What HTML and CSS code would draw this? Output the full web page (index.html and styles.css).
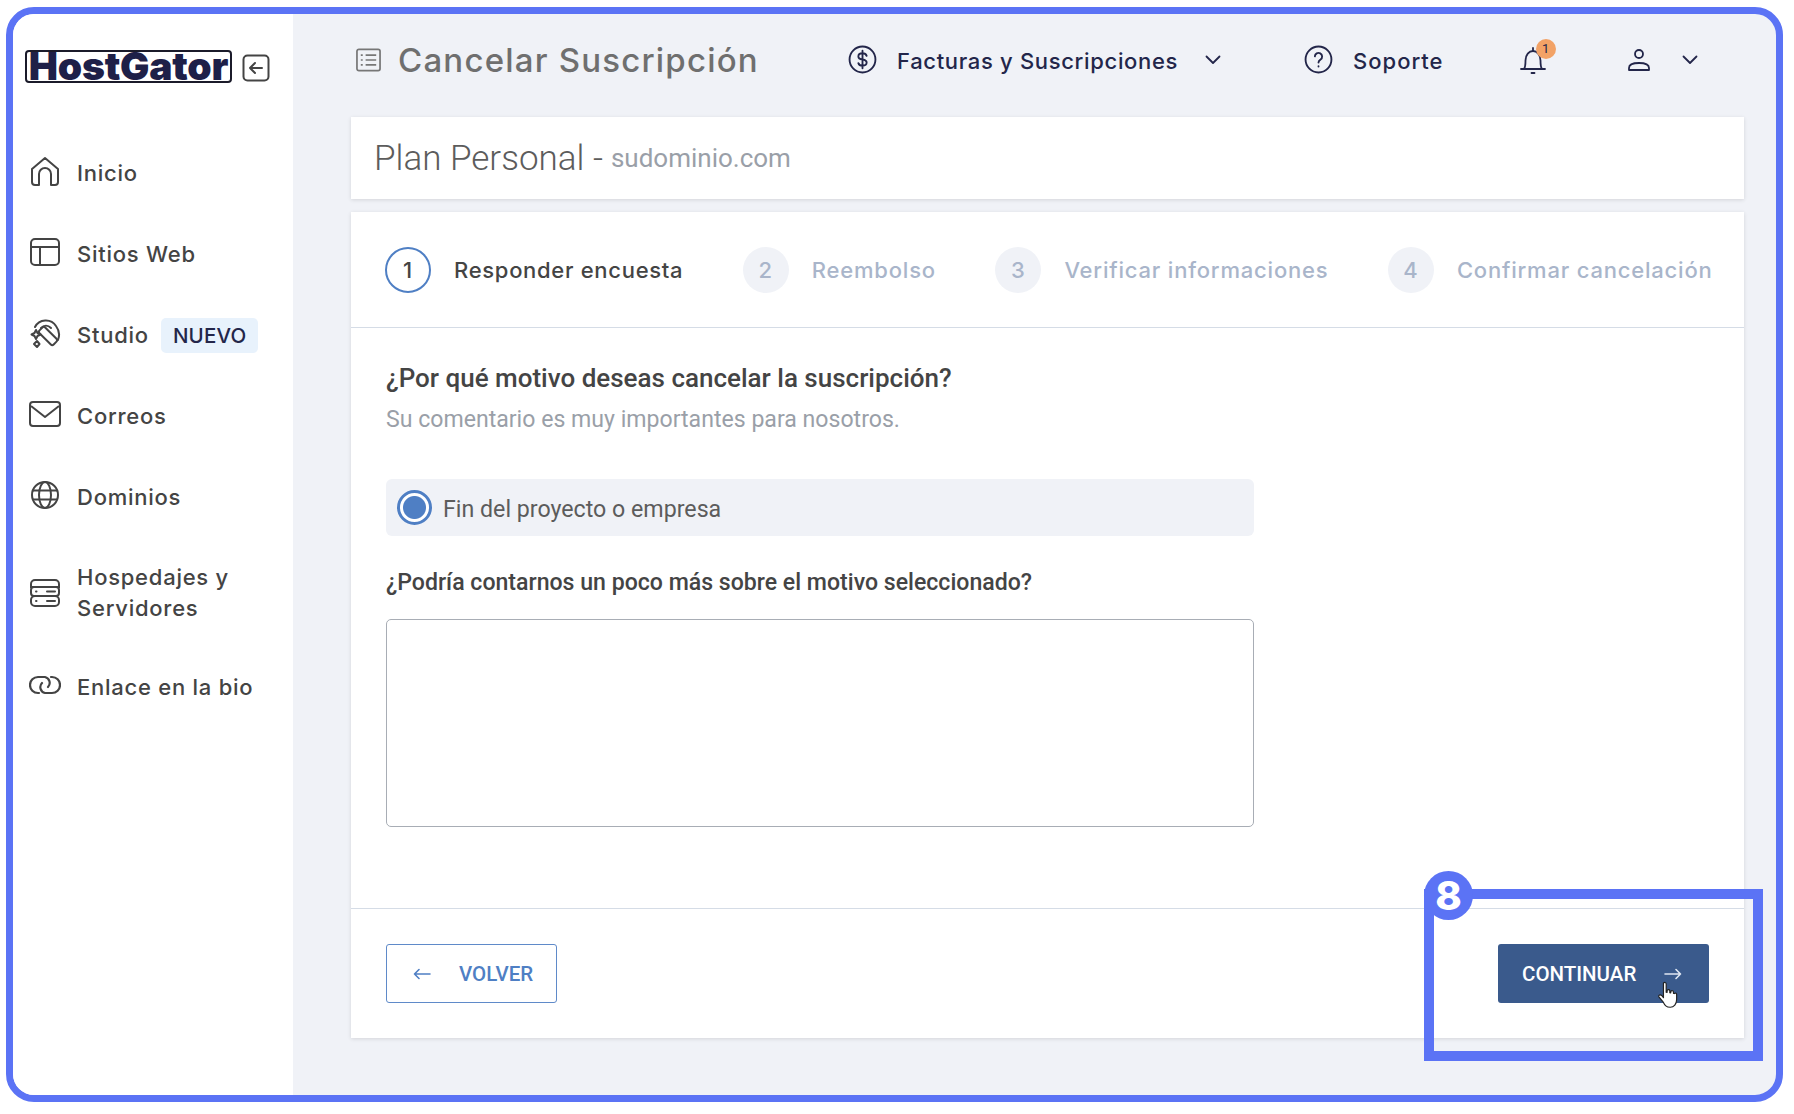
FILE: index.html
```html
<!DOCTYPE html>
<html lang="es">
<head>
    <meta charset="UTF-8">
    <title>Cancelar Suscripción</title>
    <link rel="stylesheet" href="styles.css">
</head>
<body>

    <div class="frame">
        <aside class="sidebar">
            <div class="brand">
                <div class="logo">HostGator</div>
                <svg class="collapse" viewBox="0 0 28 28" fill="none" stroke="#444" stroke-width="2" stroke-linecap="round" stroke-linejoin="round"><rect x="1.5" y="1.5" width="25" height="25" rx="4"/><path d="M20 14H8M13 9l-5 5 5 5"/></svg>
            </div>
            <nav class="menu">
                <a class="menu-item">
                    <svg viewBox="0 0 32 32" fill="none" stroke="#444" stroke-width="2" stroke-linejoin="round"><path d="M3 14 16 3l13 11v13a3 3 0 0 1-3 3h-4V19a6 6 0 0 0-12 0v11H6a3 3 0 0 1-3-3z"/></svg>
                    <span>Inicio</span>
                </a>
                <a class="menu-item">
                    <svg viewBox="0 0 32 32" fill="none" stroke="#444" stroke-width="2"><rect x="2" y="3" width="28" height="26" rx="4"/><path d="M2 11h28M11 11v18"/></svg>
                    <span>Sitios Web</span>
                </a>
                <a class="menu-item">
                    <svg viewBox="0 0 32 32" fill="none" stroke="#444" stroke-width="2" stroke-linejoin="round" stroke-linecap="round"><path d="M6 10C10 2 22 1 27 9c3 4 4 9 2 14"/><path d="M12 11c3-3 7-3 10 0"/><rect x="15" y="9" width="8" height="20" rx="2" transform="rotate(-45 19 19)"/><path d="M7 13l1.500 3 3 1.500-3 1.500L7 22l-1.500-3-3-1.500 3-1.500zM8 24l2.500 3-2.500 3-3-3z"/></svg>
                    <span>Studio</span>
                    <span class="tag">NUEVO</span>
                </a>
                <a class="menu-item">
                    <svg viewBox="0 0 32 32" fill="none" stroke="#444" stroke-width="2" stroke-linejoin="round"><rect x="1" y="4" width="30" height="24" rx="3"/><path d="M2 8l14 11L30 8"/></svg>
                    <span>Correos</span>
                </a>
                <a class="menu-item">
                    <svg viewBox="0 0 32 32" fill="none" stroke="#444" stroke-width="2"><circle cx="16" cy="16" r="13"/><ellipse cx="16" cy="16" rx="6" ry="13"/><path d="M4 11.500h24M4 20.500h24"/></svg>
                    <span>Dominios</span>
                </a>
                <a class="menu-item tall">
                    <svg viewBox="0 0 32 32" fill="none" stroke="#444" stroke-width="2" stroke-linecap="round"><path d="M6 3h20a4 4 0 0 1 4 4v3H2V7a4 4 0 0 1 4-4z"/><rect x="2" y="10" width="28" height="9" rx="3"/><rect x="2" y="19" width="28" height="10" rx="4"/><path d="M18 14.500h8M18 24h8M7 14.500h.5M7 24h.5"/></svg>
                    <span>Hospedajes y<br>Servidores</span>
                </a>
                <a class="menu-item">
                    <svg viewBox="0 0 32 32" fill="none" stroke="#444" stroke-width="2.200" stroke-linecap="round"><path d="M10 24H9a8 8 0 0 1 0-16h7a6 6 0 0 1 3 10"/><path d="M22 8h1a8 8 0 0 1 0 16h-7a6 6 0 0 1-3-10"/></svg>
                    <span>Enlace en la bio</span>
                </a>
            </nav>
        </aside>

        <main class="main">
            <header class="topbar">
                <div class="page-title">
                    <svg viewBox="0 0 26 24" fill="none" stroke="#777" stroke-width="1.800"><rect x="1" y="1" width="24" height="22" rx="2"/><path d="M10 7h11M10 12h11M10 17h11M5 7h2M5 12h2M5 17h2"/></svg>
                    <h1>Cancelar Suscripción</h1>
                </div>
                <a class="top-link billing">
                    <svg viewBox="0 0 28 28" fill="none" stroke="#23264a" stroke-width="1.800" stroke-linecap="round"><circle cx="14" cy="14" r="12.500"/><path d="M18 10.500c-.5-1.500-2-2.500-4-2.500-2.500 0-4 1.300-4 3s1.500 2.600 4 3 4 1.300 4 3-1.500 3-4 3c-2 0-3.500-1-4-2.500M14 5.500v17"/></svg>
                    <span>Facturas y Suscripciones</span>
                    <svg class="chevron" viewBox="0 0 16 10" fill="none" stroke="#23264a" stroke-width="1.800" stroke-linecap="round" stroke-linejoin="round"><path d="M1.500 1.500 8 8l6.500-6.500"/></svg>
                </a>
                <a class="top-link support">
                    <svg viewBox="0 0 28 28" fill="none" stroke="#23264a" stroke-width="1.800" stroke-linecap="round"><circle cx="14" cy="14" r="12.500"/><path d="M10.500 11a3.500 3.500 0 1 1 5.500 3c-1.300.9-2 1.500-2 3M14 20.500v.3"/></svg>
                    <span>Soporte</span>
                </a>
                <div class="bell">
                    <svg viewBox="0 0 26 28" fill="none" stroke="#23264a" stroke-width="1.800" stroke-linecap="round" stroke-linejoin="round"><path d="M1 23h24M4 23c1.500-2 1.500-4 1.500-8.500C5.500 9 9 5 13 5s7.500 4 7.500 9.500c0 4.500 0 6.500 1.500 8.500M13 2v3M11.500 27h3"/></svg>
                    <span class="bell-count">1</span>
                </div>
                <div class="account">
                    <svg viewBox="0 0 24 24" fill="none" stroke="#23264a" stroke-width="1.800" stroke-linejoin="round"><circle cx="12" cy="6" r="4"/><path d="M2 22v-2c0-3 3-5 10-5s10 2 10 5v2z"/></svg>
                    <svg class="chevron" viewBox="0 0 16 10" fill="none" stroke="#23264a" stroke-width="1.800" stroke-linecap="round" stroke-linejoin="round"><path d="M1.500 1.500 8 8l6.500-6.500"/></svg>
                </div>
            </header>

            <section class="plan-card">
                <span class="plan-name">Plan Personal -</span>
                <span class="plan-domain">sudominio.com</span>
            </section>

            <section class="card">
                <ol class="steps">
                    <li class="step active"><span class="step-num">1</span><span>Responder encuesta</span></li>
                    <li class="step"><span class="step-num">2</span><span>Reembolso</span></li>
                    <li class="step"><span class="step-num">3</span><span>Verificar informaciones</span></li>
                    <li class="step"><span class="step-num">4</span><span>Confirmar cancelación</span></li>
                </ol>

                <div class="form">
                    <h2>¿Por qué motivo deseas cancelar la suscripción?</h2>
                    <p class="hint">Su comentario es muy importantes para nosotros.</p>
                    <div class="option">
                        <span class="radio"></span>
                        <span>Fin del proyecto o empresa</span>
                    </div>
                    <label class="more-label" for="motivo">¿Podría contarnos un poco más sobre el motivo seleccionado?</label>
                    <textarea id="motivo" class="more-input"></textarea>
                </div>

                <footer class="actions">
                    <button class="btn btn-back">
                        <svg viewBox="0 0 18 12" fill="none" stroke="#4f7fc4" stroke-width="1.600" stroke-linecap="round" stroke-linejoin="round"><path d="M17 6H1.500M6 1.500 1.500 6 6 10.500"/></svg>
                        VOLVER
                    </button>
                    <button class="btn btn-next">
                        CONTINUAR
                        <svg viewBox="0 0 18 12" fill="none" stroke="#dfe6f2" stroke-width="1.600" stroke-linecap="round" stroke-linejoin="round"><path d="M1 6h15.500M12 1.500 16.500 6 12 10.500"/></svg>
                    </button>
                </footer>

                <svg class="cursor" viewBox="0 0 22 30" fill="#fff" stroke="#222" stroke-width="1.300" stroke-linejoin="round"><path d="M6 2c1-1.500 3-1 3 1v9l1 .2V10c1-1.500 3-1 3 .5v2l1 .2v-1.500c1-1.500 3-1 3 .5v1.500l1 .2c1-1 2.500-.5 2.500 1V20c0 5-3 8.500-7 8.500-4.500 0-6-2-8-6L1 17c-.7-1.500 1.300-3 3-1.500l2 2.500z"/></svg>

                <div class="highlight"><span class="highlight-num">8</span></div>
            </section>
        </main>
    </div>

</body>
</html>
```

FILE: styles.css
```css
* {
    box-sizing: border-box;
}
html, body {
    margin: 0;
    height: 100%;
    background-color: #fff;
    overflow: hidden;
}
body {
    padding: 7px 11px 12px 6px;
    font-family: Roboto, "Liberation Sans", sans-serif;
}
.frame {
    display: flex;
    height: 100%;
    border: 7px solid #5b73f5;
    border-radius: 28px;
    background-color: #f0f2f7;
    overflow: hidden;
}

/* menu lateral */
.sidebar {
    width: 280px;
    flex-shrink: 0;
    background-color: #fff;
    padding: 36px 0 0 12px;
}
.brand {
    display: flex;
    align-items: center;
    height: 33px;
}
.logo {
    width: 207px;
    height: 33px;
    border: 2px solid #1b1b2a;
    border-radius: 4px;
    color: #1e2048;
    font-family: Inter, sans-serif;
    font-size: 39px;
    font-weight: 900;
    line-height: 28px;
    text-align: center;
    letter-spacing: -.2px;
}
.collapse {
    width: 28px;
    height: 28px;
    margin: 3px 0 0 10px;
}
.menu {
    margin-top: 50px;
}
.menu-item {
    display: flex;
    align-items: center;
    height: 81px;
    padding-left: 4px;
    color: #444;
    font-family: Inter, sans-serif;
    font-size: 22px;
    font-weight: 500;
    line-height: 31px;
    letter-spacing: .75px;
}
.menu-item svg {
    width: 32px;
    height: 32px;
    flex-shrink: 0;
    margin: 0 16px 5px 0;
}
.menu-item.tall {
    height: 109px;
}
.menu-item.tall svg {
    margin-bottom: 0;
}
.tag {
    margin-left: 12px;
    padding: 0 12px;
    height: 35px;
    line-height: 35px;
    border-radius: 5px;
    background-color: #e8f2fc;
    color: #23264a;
    font-size: 20.500px;
    letter-spacing: .2px;
}

/* contenido */
.main {
    flex: 1;
    padding-left: 58px;
    padding-right: 32px;
    min-width: 0;
    position: relative;
}
.topbar {
    display: flex;
    align-items: center;
    height: 103px;
    padding: 0 0 12px 5px;
    font-family: Inter, sans-serif;
}
.page-title {
    display: flex;
    align-items: center;
    width: 492px;
}
.page-title svg {
    width: 25px;
    height: 24px;
    margin-right: 17px;
}
h1 {
    margin: 0;
    color: #6f6f6f;
    font-size: 33px;
    font-weight: 500;
    letter-spacing: 1.200px;
}
.top-link {
    display: flex;
    align-items: center;
    color: #23264a;
    font-size: 22px;
    font-weight: 500;
    letter-spacing: .67px;
}
.top-link span {
    padding-top: 2px;
}
.top-link svg {
    width: 29px;
    height: 29px;
    margin-right: 20px;
}
.top-link .chevron {
    width: 16px;
    height: 10px;
    margin: 0 0 0 27px;
}
.support {
    margin-left: 83px;
}
.support span {
    letter-spacing: 1px;
}
.bell {
    position: relative;
    width: 26px;
    height: 28px;
    margin-left: 76px;
}
.bell svg {
    display: block;
    width: 26px;
    height: 28px;
}
.bell-count {
    position: absolute;
    top: -7px;
    right: -10px;
    width: 20px;
    height: 20px;
    border-radius: 50%;
    background-color: #f2a266;
    color: #23264a;
    font-family: Roboto, sans-serif;
    font-size: 13px;
    line-height: 20px;
    text-align: center;
}
.account {
    display: flex;
    align-items: center;
    margin-left: 81px;
}
.account svg {
    width: 24px;
    height: 24px;
}
.account .chevron {
    width: 16px;
    height: 10px;
    margin-left: 31px;
}
.plan-card {
    height: 82px;
    padding-left: 23px;
    background-color: #fff;
    box-shadow: 0 1px 4px rgba(0, 0, 0, 0.12);
    display: flex;
    align-items: center;
}
.plan-name {
    color: #5c5c5c;
    font-size: 35px;
    font-weight: 300;
}
.plan-domain {
    margin-left: 8px;
    color: #9a9fa8;
    font-size: 26px;
}
.card {
    position: relative;
    height: 826px;
    margin-top: 13px;
    background-color: #fff;
    box-shadow: 0 1px 4px rgba(0, 0, 0, 0.12);
}
.steps {
    display: flex;
    align-items: center;
    height: 116px;
    margin: 0;
    padding: 0 0 0 34px;
    list-style: none;
    border-bottom: 1px solid #d5dce6;
    font-family: Inter, sans-serif;
    font-size: 22px;
    font-weight: 500;
    letter-spacing: .8px;
    color: #a9b5ca;
}
.step {
    display: flex;
    align-items: center;
    flex-shrink: 0;
    margin-right: 59.500px;
    white-space: nowrap;
}
.step:last-child {
    margin-right: 0;
}
.step-num {
    width: 46px;
    height: 46px;
    margin-right: 23px;
    border-radius: 50%;
    background-color: #f0f2f7;
    line-height: 46px;
    text-align: center;
}
.step.active {
    color: #444;
    letter-spacing: .7px;
}
.step.active .step-num {
    border: 2px solid #4f7fc4;
    background-color: #fff;
    line-height: 42px;
}
.form {
    padding: 35px 0 0 35px;
}
h2 {
    margin: 0;
    color: #444;
    font-size: 26px;
    font-weight: 500;
    line-height: 30px;
}
.hint {
    margin: 12px 0 0;
    color: #9a9fa8;
    font-size: 23.100px;
    line-height: 30px;
}
.option {
    display: flex;
    align-items: center;
    width: 868px;
    height: 57px;
    margin-top: 44px;
    padding: 2px 0 0 11px;
    border-radius: 6px;
    background-color: #f0f2f7;
    color: #5c5c5c;
    font-size: 23.200px;
}
.radio {
    width: 35px;
    height: 35px;
    margin: -2px 11px 0 0;
    border: 3px solid #4f7fc4;
    border-radius: 50%;
    background: radial-gradient(circle, #4f7fc4 0 11px, #fff 12px);
}
.more-label {
    display: block;
    margin-top: 32px;
    color: #444;
    font-size: 23.100px;
    font-weight: 500;
    line-height: 30px;
}
.more-input {
    display: block;
    width: 868px;
    height: 208px;
    margin-top: 21px;
    border: 1px solid #a8adb5;
    border-radius: 5px;
    background-color: #fff;
    resize: none;
}
.actions {
    position: absolute;
    left: 0;
    right: 0;
    bottom: 0;
    height: 130px;
    padding: 35px 35px 0;
    display: flex;
    justify-content: space-between;
    align-items: flex-start;
    border-top: 1px solid #d5dce6;
}
.btn {
    display: flex;
    align-items: center;
    height: 59px;
    border-radius: 3px;
    font-family: Roboto, sans-serif;
    font-size: 20.500px;
    font-weight: 500;
}
.btn svg {
    width: 18px;
    height: 12px;
}
.btn-back {
    width: 171px;
    padding: 0 0 0 26px;
    border: 1.500px solid #5f8ac9;
    background-color: #fff;
    color: #4f7fc4;
}
.btn-back svg {
    margin-right: 28px;
}
.btn-next {
    width: 211px;
    padding: 0 0 0 24px;
    border: none;
    background-color: #3a5a8c;
    color: #fff;
}
.btn-next svg {
    margin-left: 28px;
}

/* encima del contenido */
.cursor {
    position: absolute;
    left: 1307px;
    bottom: 29px;
    width: 20px;
    height: 28px;
}
.highlight {
    position: absolute;
    right: -19px;
    bottom: -23px;
    width: 339px;
    height: 172px;
    border: 10px solid #5b73f5;
}
.highlight-num {
    position: absolute;
    left: -10px;
    top: -28px;
    width: 49px;
    height: 49px;
    border-radius: 50%;
    background-color: #5b73f5;
    color: #fff;
    font-family: Inter, sans-serif;
    font-size: 40px;
    font-weight: 800;
    line-height: 49px;
    text-align: center;
}
```
